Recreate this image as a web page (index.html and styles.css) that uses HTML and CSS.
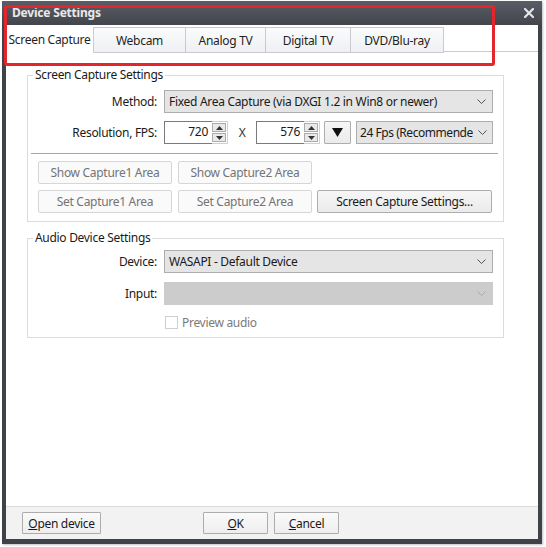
FILE: index.html
```html
<!DOCTYPE html>
<html>
<head>
<meta charset="utf-8">
<link rel="stylesheet" href="styles.css">
</head>
<body>
<div class="window">
  <div class="titlebar">
    <span class="title">Device Settings</span>
    <svg class="close" width="10" height="10" viewBox="0 0 10 10"><path d="M1 1L9 9M9 1L1 9" stroke="#e6e6e6" stroke-width="2.2" stroke-linecap="square"/></svg>
  </div>
  <div class="client">
    <div class="tabs">
      <div class="tab active">Screen Capture</div>
      <div class="tab t-webcam">Webcam</div>
      <div class="tab t-analog">Analog TV</div>
      <div class="tab t-digital">Digital TV</div>
      <div class="tab t-dvd">DVD/Blu-ray</div>
    </div>
    <div class="panel">
      <fieldset class="group g-capture">
        <legend>Screen Capture Settings</legend>
        <div class="row r-method">
          <label class="lbl">Method:</label>
          <div class="select wide"><span>Fixed Area Capture (via DXGI 1.2 in Win8 or newer)</span><svg class="chev" width="9" height="6" viewBox="0 0 9 6"><path d="M0.5 0.5L4.5 4.5L8.5 0.5" fill="none" stroke="#555" stroke-width="1"/></svg></div>
        </div>
        <div class="row r-res">
          <label class="lbl">Resolution, FPS:</label>
          <div class="spin">
            <div class="num">720</div>
            <div class="spinbtns"><div class="sb"><svg width="7" height="4" viewBox="0 0 7 4"><path d="M3.5 0L7 4H0Z" fill="#333"/></svg></div><div class="sb"><svg width="7" height="4" viewBox="0 0 7 4"><path d="M0 0H7L3.5 4Z" fill="#333"/></svg></div></div>
          </div>
          <span class="x">X</span>
          <div class="spin">
            <div class="num">576</div>
            <div class="spinbtns"><div class="sb"><svg width="7" height="4" viewBox="0 0 7 4"><path d="M3.5 0L7 4H0Z" fill="#333"/></svg></div><div class="sb"><svg width="7" height="4" viewBox="0 0 7 4"><path d="M0 0H7L3.5 4Z" fill="#333"/></svg></div></div>
          </div>
          <div class="btn drop"><svg width="11" height="9" viewBox="0 0 11 9"><path d="M0 0H11L5.5 9Z" fill="#111"/></svg></div>
          <div class="select fps"><span>24 Fps (Recommende</span><svg class="chev" width="9" height="6" viewBox="0 0 9 6"><path d="M0.5 0.5L4.5 4.5L8.5 0.5" fill="none" stroke="#555" stroke-width="1"/></svg></div>
        </div>
        <div class="sep"></div>
        <div class="btnrow">
          <div class="btn dis w133">Show Capture1 Area</div>
          <div class="btn dis w133">Show Capture2 Area</div>
        </div>
        <div class="btnrow">
          <div class="btn dis w133">Set Capture1 Area</div>
          <div class="btn dis w133">Set Capture2 Area</div>
          <div class="btn w175">Screen Capture Settings...</div>
        </div>
      </fieldset>
      <fieldset class="group g-audio">
        <legend>Audio Device Settings</legend>
        <div class="row r-device">
          <label class="lbl">Device:</label>
          <div class="select wide"><span>WASAPI - Default Device</span><svg class="chev" width="9" height="6" viewBox="0 0 9 6"><path d="M0.5 0.5L4.5 4.5L8.5 0.5" fill="none" stroke="#555" stroke-width="1"/></svg></div>
        </div>
        <div class="row r-input">
          <label class="lbl">Input:</label>
          <div class="select wide disabled"><span></span><svg class="chev" width="9" height="6" viewBox="0 0 9 6"><path d="M0.5 0.5L4.5 4.5L8.5 0.5" fill="none" stroke="#aaa" stroke-width="1"/></svg></div>
        </div>
        <div class="row r-check">
          <span class="check"></span><span class="checklbl">Preview audio</span>
        </div>
      </fieldset>
    </div>
    <div class="footer">
      <div class="btn fbtn w-open"><u>O</u>pen device</div>
      <div class="fright">
        <div class="btn fbtn w-ok"><u>O</u>K</div>
        <div class="btn fbtn w-ok"><u>C</u>ancel</div>
      </div>
    </div>
  </div>
  <div class="annot"></div>
</div>
</body>
</html>
```
FILE: styles.css
```css
* { box-sizing: border-box; }
html, body { margin: 0; padding: 0; background: #ffffff; }
body {
  font-family: "Noto Sans", "Open Sans", sans-serif;
  font-size: 12px;
  letter-spacing: -0.3px;
  color: #1a1a1a;
  width: 546px;
  height: 547px;
  overflow: hidden;
}
.window {
  position: relative;
  margin: 1px 0 0 2px;
  width: 540px;
  height: 543px;
  background: #3f4249;
  padding: 0 4px 5px 4px;
  display: flex;
  flex-direction: column;
  box-shadow: 1px 1px 2px rgba(0,0,0,0.25);
}
.titlebar {
  height: 24px;
  flex: none;
  display: flex;
  align-items: center;
  justify-content: space-between;
  background: linear-gradient(#5a5d65, #42454c);
  margin: 0 -4px;
  padding: 0 8px 0 10px;
}
.title {
  color: #e9e9e9;
  font-weight: bold;
  font-size: 12px;
  line-height: 14px;
  letter-spacing: -0.2px;
}
.close { display: block; }
.client {
  flex: 1;
  background: #ffffff;
  display: flex;
  flex-direction: column;
}
.tabs {
  display: flex;
  height: 27px;
  padding-top: 1px;
  padding-left: 1px;
  border-bottom: 1px solid #c9cbd0;
  flex: none;
}
.tab {
  height: 26px;
  display: flex;
  align-items: center;
  justify-content: center;
  font-size: 12px;
  color: #1f1f1f;
  white-space: nowrap;
  background: linear-gradient(#fbfbfc, #eef0f3);
  border: 1px solid #c9cbd0;
  border-left: none;
  margin-top: 1px;
  flex: none;
}
.tab.active {
  background: #ffffff;
  border: none;
  margin-top: 0;
  height: 27px;
  width: 86px;
  padding-right: 1px;
}
.t-webcam { width: 93px; border-left: 1px solid #c9cbd0; }
.t-analog { width: 80px; }
.t-digital { width: 85px; }
.t-dvd { width: 93px; }
.panel {
  flex: 1;
  padding: 15px 34px 0 21px;
}
.group {
  margin: 0;
  border: 1px solid #dcdcdc;
  padding: 0 10px 0 0;
  min-width: 0;
}
.group legend {
  padding: 0 2px;
  margin-left: 5px;
  font-size: 12px;
  color: #1a1a1a;
  line-height: 16px;
}
.g-capture { height: 155px; }
.g-audio { margin-top: 8px; height: 108px; }
.row {
  display: flex;
  align-items: center;
  height: 23px;
}
.r-method { margin-top: 7px; }
.r-res { margin-top: 8px; }
.lbl {
  width: 129px;
  text-align: right;
  margin-right: 7px;
  flex: none;
}
.select {
  height: 23px;
  background: #e5e5e5;
  border: 1px solid #adadad;
  display: flex;
  align-items: center;
  justify-content: space-between;
  padding: 0 6px 0 4px;
  white-space: nowrap;
  overflow: hidden;
  flex: none;
}
.chev { flex: none; margin-left: 2px; }
.wide { width: 329px; }
.select.disabled { background: #cccccc; border-color: #cccccc; }
.spin { display: flex; height: 23px; flex: none; }
.num {
  width: 48px;
  height: 23px;
  border: 1px solid #7a7a7a;
  border-right: none;
  text-align: right;
  padding: 0 4px;
  line-height: 20px;
  background: #fff;
}
.spinbtns {
  width: 16px;
  display: flex;
  flex-direction: column;
  justify-content: space-between;
  border: 1px solid #d0d0d0;
  border-left: none;
  padding: 1px 1px 1px 0;
  background: #fff;
}
.sb {
  height: 9px;
  border: 1px solid #acacac;
  background: #e9e9e9;
  display: flex;
  align-items: center;
  justify-content: center;
}
.sb svg { display: block; }
.x { width: 28px; text-align: center; color: #333; flex: none; }
.btn {
  height: 23px;
  border: 1px solid #adadad;
  background: linear-gradient(#f6f6f6, #ebebeb);
  display: flex;
  align-items: center;
  justify-content: center;
  color: #1a1a1a;
  border-radius: 2px;
  white-space: nowrap;
  flex: none;
}
.drop { width: 27px; margin-left: 4px; border-radius: 1px; }
.fps { width: 137px; margin-left: 5px; padding: 0 5px 0 3px; }
.fps span { letter-spacing: -0.45px; }
.sep {
  height: 1px;
  background: #a6a6a6;
  margin: 9px -5px 0 3px;
}
.btnrow {
  display: flex;
  gap: 6px;
  margin-left: 10px;
  margin-top: 7px;
}
.btnrow + .btnrow { margin-top: 6px; }
.btn.dis {
  color: #747474;
  border-color: #d6d6d6;
  background: #fafafa;
}
.w133 { width: 134px; }
.w175 { width: 175px; margin-left: -1px; }
.r-device { margin-top: 4px; }
.r-input { margin-top: 9px; }
.r-check { margin-top: 6px; padding-left: 137px; }
.check {
  width: 13px;
  height: 13px;
  border: 1px solid #cfcfcf;
  background: #fff;
  margin-right: 4px;
}
.checklbl { color: #7a7a7a; }
.footer {
  height: 33px;
  flex: none;
  background: #f2f2f2;
  border-top: 1px solid #dadada;
  display: flex;
  align-items: center;
  justify-content: space-between;
  padding: 0 0 0 16px;
}
.fright { display: flex; gap: 6px; margin-right: 199px; }
.fbtn {
  height: 22px;
  border-radius: 1px;
  border-color: #adadad;
  background: linear-gradient(#fafafa, #eeeeee);
}
.w-open { width: 79px; }
.w-ok { width: 65px; }
.annot {
  position: absolute;
  left: 2px;
  top: 4px;
  width: 491px;
  height: 61px;
  border: 3px solid #e3262b;
  border-radius: 3px;
  pointer-events: none;
}
```
